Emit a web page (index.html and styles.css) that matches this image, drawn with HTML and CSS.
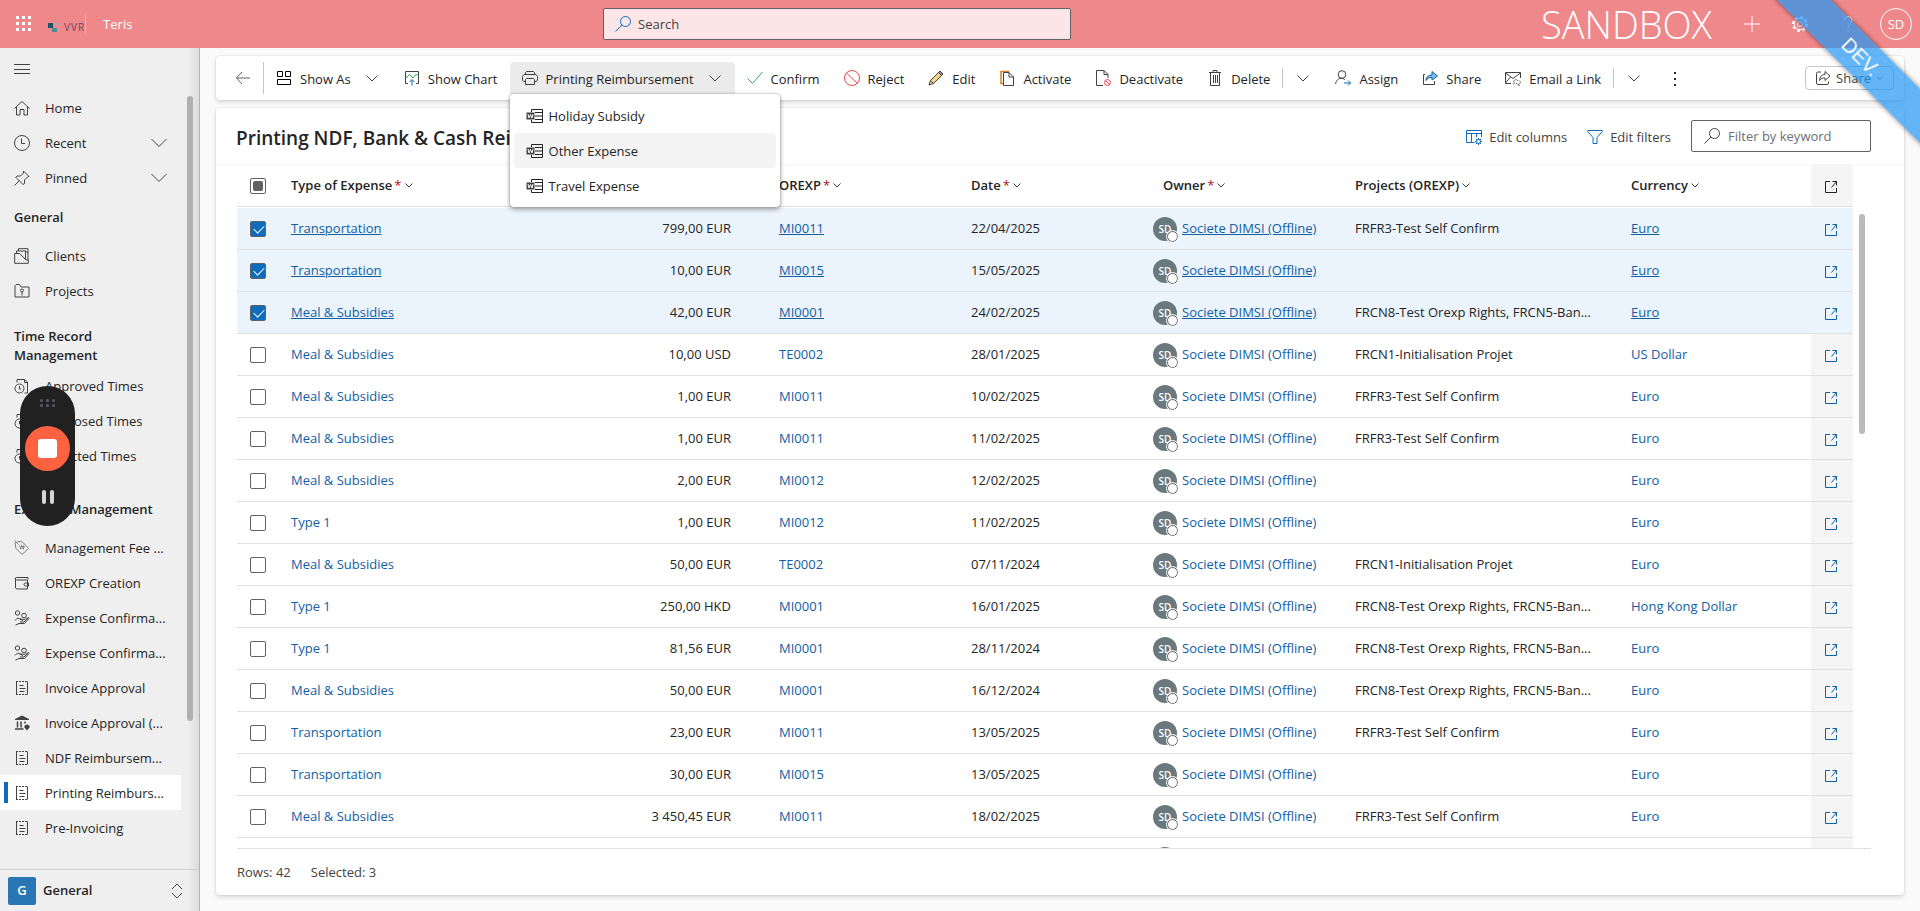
FILE: index.html
```html
<!DOCTYPE html>
<html lang="en">
<head>
    <meta charset="UTF-8">
    <meta name="viewport" content="width=device-width, initial-scale=1.0">
    <title>Printing Reimbursement - Teris</title>
    <link rel="stylesheet" href="styles.css">
</head>
<body>
    <!-- icon sprite -->
    <svg class="sprite" aria-hidden="true">
        <symbol id="i-chevron" viewBox="0 0 16 16"><path d="M2.5 5.500 8 11l5.500-5.500"/></symbol>
        <symbol id="i-chevron-big" viewBox="0 0 16 16"><path d="M.5 4 8 11.500 15.500 4"/></symbol>
        <symbol id="i-sort" viewBox="0 0 10 10"><path d="m1.500 3.500 3.500 3.500 3.500-3.500"/></symbol>
        <symbol id="i-search" viewBox="0 0 16 16"><circle cx="10.500" cy="5.500" r="5"/><path d="M7 9 .5 15.500"/></symbol>
        <symbol id="i-home" viewBox="0 0 16 16"><path d="M.5 8.500 8 1.500l7.500 7M2.500 7v8H6v-5.500h4V15h3.500V7"/></symbol>
        <symbol id="i-clock" viewBox="0 0 16 16"><circle cx="8" cy="8" r="7.500"/><path d="M7.500 3.500v5H11"/></symbol>
        <symbol id="i-pin" viewBox="0 0 16 16"><path d="m.5 15.500 5-5M9.500 1l5.500 5.500-1.500.5-3 3v3.500L9 14.500 1.800 7.300 3 6h3.500l3-3z"/></symbol>
        <symbol id="i-clients" viewBox="0 0 16 16"><path d="M.7 5.500h5L12 12h2.300V15.300H.7zM2.500 5.500V3h9M4.500 3V.7h9.500V12M14 5 11.500 3v8.500"/></symbol>
        <symbol id="i-projects" viewBox="0 0 16 16"><path d="M1 2.500V14h14V4H7L5.500 1.500H2z"/><circle cx="8" cy="7.500" r="1.500"/><path d="M8 9v3.500"/></symbol>
        <symbol id="i-times" viewBox="0 0 16 16"><circle cx="5.500" cy="10.500" r="4.500"/><path d="M5.500 8v3H7M3 4.500v-3h7.500L13.500 4v11h-3M10.500 1.500v3h3"/></symbol>
        <symbol id="i-tag" viewBox="0 0 16 16"><g class="soft"><path d="m1 3 1 5.500 6 6L14.500 8.500 8.500 2 4.500 1.500zM.5.5l4 4"/><path d="M5.500 5.500 7 8.500M8 4.500l-1 2 3 .5M6 9l5-2.500M9.500 5.500v4"/></g></symbol>
        <symbol id="i-wallet" viewBox="0 0 16 16"><path d="M14 4.500V2.500H2.500a1 1 0 0 0 0 2.500H13.500v9H3L1.500 13V3M14.500 8h-3a1.500 1.500 0 0 0 0 3h3z"/></symbol>
        <symbol id="i-coins" viewBox="0 0 16 16"><circle cx="3.500" cy="3" r="2.200"/><circle cx="10" cy="5.500" r="2.300"/><path d="M1 10.500 3.500 8l4 1.500 1 1.500M6 12h4L14.500 7.500l.5 1L10.500 13.500H5L1.500 15M6 9l5 .5 2-2"/></symbol>
        <symbol id="i-bill" viewBox="0 0 16 16"><path d="M2.500 1.500v13M13.500 1.500v13M5.500 5.500h4M5.500 8.500h6M5.500 11.500h5"/><path class="dashes" d="M2 1.500h12M2 14.500h12"/></symbol>
        <symbol id="i-bank" viewBox="0 0 16 16"><path class="solid" d="M8 .5 15 4v1H1V4z"/><path class="thick" d="M3.500 6.500v6M7 6.500v6M11 6.500v2M1 14h8.500"/><path class="solid" d="m13 9.500 2.500 1v2L13 15.500l-2.500-3v-2z"/></symbol>
        <symbol id="i-back" viewBox="0 0 16 16"><path d="M7 2 1.500 8 7 14M1.500 8H15"/></symbol>
        <symbol id="i-showas" viewBox="0 0 16 16"><path d="M1.500 1.500h5v5h-5zM9.500 1.500h5v5h-5zM1.500 9.500h13v5h-13z"/></symbol>
        <symbol id="i-chart" viewBox="0 0 16 16"><path d="M4 13.500H1.500V1.500h13v12H12"/><path class="green" d="m2 8 3.500-3.500L9 8l3.500-4 2 2"/><path class="blue" d="M8 15.500V10M5.500 12 8 9.500l2.500 2.500"/></symbol>
        <symbol id="i-print" viewBox="0 0 16 16"><path d="M3.500 4.500V2.500l1-1h7l1 1v2M3.500 11.500H1.500L.5 10V6.500L2 4.500h12l1.500 2V10l-1 1.500h-2M4.500 8.500h7l1 1v5h-9v-5z"/></symbol>
        <symbol id="i-word" viewBox="0 0 17 16"><path class="ink" d="M5.500 4V1.500h11v13h-11V12M9 4.500h7.500M9 8h7.500M9 11.500h7.500"/><path class="solid" d="M.5 4.500h8v7h-8z"/><path class="pen" d="M2 6l1 4 1.500-3.500L6 10l1-4"/></symbol>
        <symbol id="i-check" viewBox="0 0 16 16"><path class="green" d="m.5 8.500 5 5L15.500 2"/></symbol>
        <symbol id="i-ban" viewBox="0 0 16 16"><g class="red"><circle cx="8" cy="8" r="7.500"/><path d="m2.500 3 11 10.500"/></g></symbol>
        <symbol id="i-pencil" viewBox="0 0 16 16"><path class="wood" d="M1 15 2.500 10.500 12 1l3 3-9.500 9.500z"/><path class="plum" d="m10.500 2.500 1.500-1.500 3 3-1.500 1.500z"/><path d="m2.500 10.500 3 3"/></symbol>
        <symbol id="i-activate" viewBox="0 0 16 16"><path class="orange" d="M4 13.500H2V1.500h8"/><path d="M4.500 2.500H10L14.500 7v8.500h-10zM10 2.500V7h4.500"/></symbol>
        <symbol id="i-deactivate" viewBox="0 0 16 16"><path d="M8 15.500H1.500V.5H9L13 4.500V8M9 .5v4h4"/><g class="red"><circle cx="12.500" cy="12.500" r="3"/><path d="m10.500 10.500 4 4"/></g></symbol>
        <symbol id="i-trash" viewBox="0 0 16 16"><path d="M2 2.500h12M6 2.500v-2h4v2M3.500 2.500v13h9v-13M6.500 5v8M8.500 5v8M10.500 5v8"/></symbol>
        <symbol id="i-assign" viewBox="0 0 16 16"><circle cx="7" cy="4.500" r="3.800"/><path d="M.5 14C1.500 10 3.500 8.300 6 8.300c2 0 3 .7 4 1.700"/><path class="blue" d="M9 13h6.500M13 10.500l2.500 2.500L13 15.500"/></symbol>
        <symbol id="i-share" viewBox="0 0 16 16"><path d="M3 4.500H1.500V14.500h11V11"/><path class="sky" d="M4 10.500c.5-4 2.500-5.500 6-5.500V1.500L15.500 6 10 10V7.500c-3 0-4.500.7-6 3z"/></symbol>
        <symbol id="i-mail" viewBox="0 0 16 16"><path d="M6 13.500H.5V2.500h15V8M.5 3 8 8.500 15.500 3M.5 13 5.500 7"/><path class="soft" d="M9 12.500a2 2 0 0 1 3-2.500l1 1M14.500 10.500a2 2 0 0 1-2.500 3.500l-1-1M8 14l2-1M13 15l2 .5"/></symbol>
        <symbol id="i-share-out" viewBox="0 0 16 16"><path d="M6 2H3a1.500 1.500 0 0 0-1.500 1.500V13A1.500 1.500 0 0 0 3 14.500h9A1.500 1.500 0 0 0 13.500 13v-1.500"/><path d="M4.500 10.500c.5-4 2-6 5.500-6V1.500L15 6l-5 4.500V8C7.500 7.800 6 8.500 4.500 10.500z"/></symbol>
        <symbol id="i-columns" viewBox="0 0 16 16"><path d="M8.500 13.500H.5V1.500h15V8M.5 4.500h15M5.500 4.500v9M10.500 4.500V8"/><circle cx="12.500" cy="12.500" r="2"/><path d="M12.500 9v1.500M12.500 14.500V16M9 12.500h1.500M14.500 12.500H16M10 10l1 1M14 14l1 1M15 10l-1 1M11 14l-1 1"/></symbol>
        <symbol id="i-filter" viewBox="0 0 16 16"><path d="M.7 1.500h14.600v1L10 8.500v6H6v-6L.7 2.500z"/></symbol>
        <symbol id="i-open" viewBox="0 0 12 12"><path d="M5 .5H.5v11h11V7M7.500.5h4v4M11.500.5l-5 6"/></symbol>
        <symbol id="i-plus" viewBox="0 0 16 16"><path d="M8 0v16M0 8h16"/></symbol>
        <symbol id="i-gear" viewBox="0 0 16 16"><circle cx="8" cy="8" r="5.600"/><circle cx="8" cy="8" r="2.500"/><circle class="cogs" cx="8" cy="8" r="7"/></symbol>
        <symbol id="i-help" viewBox="0 0 16 16"><path d="M4 4.500C4 2 5.500.7 8 .7s4 1.300 4 3.600C12 7.500 8 8 8 11.500M8 14v1.500"/></symbol>
        <symbol id="i-updown" viewBox="0 0 12 16"><path d="M1 6l5-5 5 5M1 10l5 5 5-5"/></symbol>
        <symbol id="i-menu" viewBox="0 0 16 16"><path d="M0 3.500h16M0 8.500h16M0 12.500h16"/></symbol>
        <symbol id="i-waffle" viewBox="0 0 16 16"><path class="dots" d="M0 0h3v3H0zM6 0h3v3H6zM12 0h3v3h-3zM0 6h3v3H0zM6 6h3v3H6zM12 6h3v3h-3zM0 12h3v3H0zM6 12h3v3H6zM12 12h3v3h-3z"/></symbol>
    </svg>

    <header class="topbar">
        <div class="topbar-left">
            <button class="icon-button" aria-label="App launcher"><svg class="icon"><use href="#i-waffle"/></svg></button>
            <a class="logo" href="#">
                <svg class="logo-mark" viewBox="0 0 12 12"><path fill="#1d5468" d="M0 2h5v5H0z"/><path fill="#b9a0a3" d="M7 1h4v4H7z"/><path fill="#47909a" d="M4 7h5v4H4z"/></svg>
                <span class="logo-text">VVR</span>
            </a>
            <a class="app-name" href="#">Teris</a>
        </div>
        <label class="search">
            <svg class="icon blue-icon"><use href="#i-search"/></svg>
            <input type="search" placeholder="Search" aria-label="Search">
        </label>
        <div class="topbar-right">
            <span class="env">SANDBOX</span>
            <button class="icon-button" aria-label="New"><svg class="icon"><use href="#i-plus"/></svg></button>
            <button class="icon-button" aria-label="Settings"><svg class="icon"><use href="#i-gear"/></svg></button>
            <button class="icon-button" aria-label="Help"><svg class="icon"><use href="#i-help"/></svg></button>
            <button class="account">SD</button>
        </div>
    </header>

    <div class="page">
        <aside class="sidebar">
            <button class="burger" aria-label="Menu"><svg class="icon"><use href="#i-menu"/></svg></button>
            <nav class="nav">
                <a class="nav-item" href="#"><svg class="icon"><use href="#i-home"/></svg>Home</a>
                <a class="nav-item" href="#"><svg class="icon"><use href="#i-clock"/></svg>Recent<svg class="icon nav-chevron"><use href="#i-chevron-big"/></svg></a>
                <a class="nav-item" href="#"><svg class="icon"><use href="#i-pin"/></svg>Pinned<svg class="icon nav-chevron"><use href="#i-chevron-big"/></svg></a>
                <h2 class="nav-title">General</h2>
                <a class="nav-item" href="#"><svg class="icon"><use href="#i-clients"/></svg>Clients</a>
                <a class="nav-item" href="#"><svg class="icon"><use href="#i-projects"/></svg>Projects</a>
                <h2 class="nav-title spaced">Time Record Management</h2>
                <a class="nav-item" href="#"><svg class="icon"><use href="#i-times"/></svg>Approved Times</a>
                <a class="nav-item" href="#"><svg class="icon"><use href="#i-times"/></svg>Proposed Times</a>
                <a class="nav-item" href="#"><svg class="icon"><use href="#i-times"/></svg>Rejected Times</a>
                <h2 class="nav-title spaced">Expense Management</h2>
                <a class="nav-item" href="#"><svg class="icon"><use href="#i-tag"/></svg>Management Fee ...</a>
                <a class="nav-item" href="#"><svg class="icon"><use href="#i-wallet"/></svg>OREXP Creation</a>
                <a class="nav-item" href="#"><svg class="icon"><use href="#i-coins"/></svg>Expense Confirma...</a>
                <a class="nav-item" href="#"><svg class="icon"><use href="#i-coins"/></svg>Expense Confirma...</a>
                <a class="nav-item" href="#"><svg class="icon"><use href="#i-bill"/></svg>Invoice Approval</a>
                <a class="nav-item" href="#"><svg class="icon"><use href="#i-bank"/></svg>Invoice Approval (...</a>
                <a class="nav-item" href="#"><svg class="icon"><use href="#i-bill"/></svg>NDF Reimbursem...</a>
                <a class="nav-item active" href="#"><svg class="icon"><use href="#i-bill"/></svg>Printing Reimburs...</a>
                <a class="nav-item" href="#"><svg class="icon"><use href="#i-bill"/></svg>Pre-Invoicing</a>
                <div class="nav-scroll"></div>
            </nav>
            <button class="area">
                <span class="area-tile">G</span>
                <span class="area-name">General</span>
                <svg class="area-arrows"><use href="#i-updown"/></svg>
            </button>
        </aside>

        <main class="main">
            <div class="commands">
                <button class="back" aria-label="Back"><svg class="icon"><use href="#i-back"/></svg></button>
                <span class="rule tall"></span>
                <button class="command"><svg class="icon black"><use href="#i-showas"/></svg>Show As<svg class="icon more"><use href="#i-chevron"/></svg></button>
                <button class="command"><svg class="icon"><use href="#i-chart"/></svg>Show Chart</button>
                <div class="dropdown">
                    <button class="command open" aria-expanded="true"><svg class="icon"><use href="#i-print"/></svg>Printing Reimbursement<svg class="icon more"><use href="#i-chevron"/></svg></button>
                    <div class="menu">
                        <button class="menu-item"><svg class="icon word"><use href="#i-word"/></svg>Holiday Subsidy</button>
                        <button class="menu-item hover"><svg class="icon word"><use href="#i-word"/></svg>Other Expense</button>
                        <button class="menu-item"><svg class="icon word"><use href="#i-word"/></svg>Travel Expense</button>
                    </div>
                </div>
                <button class="command"><svg class="icon"><use href="#i-check"/></svg>Confirm</button>
                <button class="command"><svg class="icon"><use href="#i-ban"/></svg>Reject</button>
                <button class="command"><svg class="icon"><use href="#i-pencil"/></svg>Edit</button>
                <button class="command"><svg class="icon"><use href="#i-activate"/></svg>Activate</button>
                <button class="command"><svg class="icon"><use href="#i-deactivate"/></svg>Deactivate</button>
                <button class="command"><svg class="icon"><use href="#i-trash"/></svg>Delete</button>
                <span class="rule"></span>
                <button class="command" aria-label="More delete commands"><svg class="icon"><use href="#i-chevron"/></svg></button>
                <button class="command"><svg class="icon"><use href="#i-assign"/></svg>Assign</button>
                <button class="command"><svg class="icon"><use href="#i-share"/></svg>Share</button>
                <button class="command"><svg class="icon"><use href="#i-mail"/></svg>Email a Link</button>
                <span class="rule"></span>
                <button class="command" aria-label="More email commands"><svg class="icon"><use href="#i-chevron"/></svg></button>
                <button class="command overflow" aria-label="More commands"><i></i><i></i><i></i></button>
                <button class="share"><svg class="icon"><use href="#i-share-out"/></svg>Share<svg class="icon tiny"><use href="#i-sort"/></svg></button>
            </div>

            <section class="card">
                <div class="card-head">
                    <h1 class="card-title">Printing NDF, Bank &amp; Cash Reimbursement</h1>
                    <button class="tool"><svg class="icon blue-icon"><use href="#i-columns"/></svg>Edit columns</button>
                    <button class="tool"><svg class="icon blue-icon"><use href="#i-filter"/></svg>Edit filters</button>
                    <label class="filter">
                        <svg class="icon"><use href="#i-search"/></svg>
                        <input type="search" placeholder="Filter by keyword" aria-label="Filter by keyword">
                    </label>
                </div>
                <div class="grid">
                    <table class="table">
                        <colgroup>
                            <col class="col-small"><col class="col-type"><col><col><col><col><col class="col-projects"><col><col class="col-small">
                        </colgroup>
                        <thead>
                            <tr>
                                <th class="check"><input type="checkbox" class="box partial" aria-label="Select all rows"></th>
                                <th>Type of Expense<b>*</b><svg class="sort"><use href="#i-sort"/></svg></th>
                                <th class="amount">Amount</th>
                                <th>OREXP<b>*</b><svg class="sort"><use href="#i-sort"/></svg></th>
                                <th>Date<b>*</b><svg class="sort"><use href="#i-sort"/></svg></th>
                                <th>Owner<b>*</b><svg class="sort"><use href="#i-sort"/></svg></th>
                                <th>Projects (OREXP)<svg class="sort"><use href="#i-sort"/></svg></th>
                                <th>Currency<svg class="sort"><use href="#i-sort"/></svg></th>
                                <th class="launch"><svg class="open-icon"><use href="#i-open"/></svg></th>
                            </tr>
                        </thead>
                        <tbody id="rows"></tbody>
                    </table>
                    <div class="grid-scroll"></div>
                </div>
                <footer class="card-foot">
                    <span>Rows: 42</span>
                    <span>Selected: 3</span>
                </footer>
            </section>
        </main>
    </div>

    <div class="ribbon">DEV.</div>

    <div class="recorder">
        <div class="grip"><i></i><i></i><i></i><i></i><i></i><i></i></div>
        <button class="stop" aria-label="Stop recording"></button>
        <button class="pause" aria-label="Pause recording"></button>
    </div>

    <script src="script.js"></script>
</body>
</html>
```
FILE: styles.css
```css
* {
    box-sizing: border-box;
}

body {
    margin: 0;
    height: 100vh;
    display: flex;
    flex-direction: column;
    overflow: hidden;
    background-color: #fafafa;
    color: #242424;
    font-family: "Open Sans", "Noto Sans", sans-serif;
    font-size: 13px;
    line-height: 19px;
}

a {
    color: inherit;
    text-decoration: none;
}

button,
input {
    font: inherit;
    color: inherit;
    border: none;
    background: none;
    padding: 0;
    margin: 0;
}

button {
    cursor: pointer;
    white-space: nowrap;
}

/* icons */
.sprite {
    position: absolute;
    width: 0;
    height: 0;
}

.icon {
    width: 16px;
    height: 16px;
    flex: none;
    fill: none;
    stroke: #424242;
    stroke-width: 1;
}

.black {
    stroke: #000;
}

.blue-icon {
    stroke: #0f6cbd;
}

.solid {
    fill: #424242;
    stroke: none;
}

.dots {
    fill: #fff;
    stroke: none;
}

.soft {
    stroke: #808080;
}

.dashes {
    stroke-dasharray: 2 1;
}

.thick {
    stroke-width: 1.5;
}

.green {
    stroke: #2ea85a;
}

.blue {
    stroke: #0f6cbd;
}

.red {
    stroke: #e8484e;
}

.orange {
    stroke: #e07b24;
    stroke-width: 1.5;
}

.wood {
    fill: #f3d58a;
}

.plum {
    fill: #a878b8;
}

.sky {
    fill: #83bdf0;
    stroke: #0f5f9f;
}

.ink {
    stroke: #242424;
}

.pen {
    stroke: #fff;
}

.cogs {
    stroke-width: 2;
    stroke-dasharray: 3 2.5;
}

/* top bar */
.topbar {
    flex: none;
    height: 48px;
    display: flex;
    align-items: center;
    background-color: #ef888a;
    color: #fff;
}

.topbar .icon {
    stroke: #fff;
}

.topbar .blue-icon {
    stroke: #0f6cbd;
}

.topbar-left {
    width: 603px;
    padding-left: 16px;
    display: flex;
    align-items: center;
}

.icon-button {
    display: flex;
}

.logo {
    display: flex;
    align-items: center;
    gap: 4px;
    height: 20px;
    margin-left: 16px;
    padding-top: 6px;
    border-right: 1px solid #f5b5b6;
}

.logo-mark {
    width: 12px;
    height: 12px;
}

.logo-text {
    color: #6b4a5a;
    font-size: 10px;
    letter-spacing: 1px;
    line-height: 12px;
}

.app-name {
    margin-left: 17px;
}

.search {
    width: 468px;
    height: 32px;
    display: flex;
    align-items: center;
    gap: 7px;
    padding: 0 11px;
    background-color: #fbe5e6;
    border: 1px solid #616161;
    border-radius: 2px;
}

.search input,
.filter input {
    flex: 1;
    min-width: 0;
    outline: none;
}

.search input::placeholder {
    color: #424242;
}

.topbar-right {
    flex: 1;
    display: flex;
    align-items: center;
    justify-content: flex-end;
    gap: 32px;
    padding-right: 8px;
}

.env {
    font-size: 38px;
    font-weight: 300;
    line-height: 48px;
}

.account {
    width: 32px;
    height: 32px;
    margin-left: -8px;
    border: 1px solid #fff;
    border-radius: 50%;
}

/* sidebar */
.page {
    flex: 1;
    min-height: 0;
    display: flex;
}

.sidebar {
    flex: none;
    width: 200px;
    display: flex;
    flex-direction: column;
    border-right: 1px solid #b3b3b3;
    background: linear-gradient(to left, #dcdcdc, #efefef 12px);
}

.burger {
    height: 42px;
    padding-left: 14px;
    display: flex;
    align-items: center;
}

.nav {
    position: relative;
    flex: 1;
    min-height: 0;
}

.nav-item {
    position: relative;
    width: 181px;
    height: 35px;
    display: flex;
    align-items: center;
    gap: 15px;
    padding: 2px 14px 0;
    white-space: nowrap;
}

/* icons sit a little above the text */
.nav-item .icon,
.command .icon {
    margin-bottom: 2px;
}

.nav-item .nav-chevron {
    margin-left: auto;
}

.active {
    background-color: #fff;
}

/* marker of the current page */
.active::before {
    content: "";
    position: absolute;
    left: 4px;
    top: 7px;
    width: 4px;
    height: 21px;
    background-color: #0f6cbd;
}

.nav-title {
    width: 160px;
    min-height: 43px;
    display: flex;
    align-items: center;
    margin: 0;
    padding: 5px 0 3px 14px;
    font-size: 13px;
    font-weight: 600;
}

.spaced {
    margin-top: 14px;
    width: 176px;
}

.nav-scroll {
    position: absolute;
    right: 6px;
    top: 6px;
    width: 6px;
    height: 625px;
    border-radius: 3px;
    background-color: #b0b0b0;
}

.area {
    height: 42px;
    display: flex;
    align-items: center;
    padding: 0 16px 0 8px;
    border-top: 1px solid #d1d1d1;
    font-weight: 600;
}

.area-tile {
    width: 28px;
    height: 28px;
    line-height: 26px;
    margin-right: 7px;
    border-radius: 2px;
    background-color: #2a76b5;
    color: #fff;
}

.area-arrows {
    width: 12px;
    height: 16px;
    margin-left: auto;
    fill: none;
    stroke: #424242;
}

/* command bar */
.main {
    flex: 1;
    min-width: 0;
    display: flex;
    flex-direction: column;
    gap: 8px;
    padding: 8px 16px 16px;
}

.commands,
.card {
    background-color: #fff;
    border-radius: 4px;
    box-shadow: 0 0 2px rgba(0, 0, 0, 0.12), 0 2px 4px rgba(0, 0, 0, 0.14);
}

.commands {
    flex: none;
    height: 44px;
    display: flex;
    align-items: center;
    padding: 0 10px 0 19px;
}

.back {
    display: flex;
    margin-right: 12px;
}

.back .icon {
    stroke: #616161;
}

.rule {
    width: 1px;
    height: 20px;
    background-color: #c7c7c7;
}

.tall {
    height: 32px;
}

.command {
    height: 32px;
    display: flex;
    align-items: center;
    gap: 8px;
    padding: 2px 12px 0;
    border-radius: 4px;
}

.more {
    margin-left: 5px;
}

.open {
    background-color: #ebebeb;
    border-radius: 4px 4px 0 0;
}

.overflow {
    flex-direction: column;
    justify-content: center;
    gap: 4px;
    margin-left: 8px;
}

.overflow i {
    width: 2px;
    height: 2px;
    background-color: #242424;
}

.share {
    height: 24px;
    display: flex;
    align-items: center;
    gap: 5px;
    margin-left: auto;
    padding: 0 9px;
    border: 1px solid #c7c7c7;
    border-radius: 4px;
    color: #424242;
}

.tiny {
    width: 8px;
    height: 8px;
}

.dropdown {
    position: relative;
}

.menu {
    position: absolute;
    z-index: 2;
    left: 0;
    top: 32px;
    width: 270px;
    padding: 4px;
    background-color: #fff;
    border-radius: 4px;
    box-shadow: 0 0 2px rgba(0, 0, 0, 0.3), 0 2px 5px rgba(0, 0, 0, 0.4);
}

.menu-item {
    width: 100%;
    height: 35px;
    display: flex;
    align-items: center;
    gap: 6px;
    padding: 2px 12px 0;
    border-radius: 4px;
}

.hover {
    background-color: #f4f4f4;
}

.menu-item .word {
    width: 17px;
    margin-bottom: 2px;
}

/* list card */
.card {
    flex: 1;
    min-height: 0;
    display: flex;
    flex-direction: column;
}

.card-head {
    flex: none;
    height: 57px;
    display: flex;
    align-items: center;
    gap: 20px;
    padding: 0 33px 0 20px;
    border-bottom: 1px solid #f5f5f5;
}

.card-title {
    flex: 1;
    margin: 0;
    padding-top: 4px;
    font-size: 19px;
    font-weight: 600;
    line-height: 28px;
}

.tool {
    display: flex;
    align-items: center;
    gap: 7px;
    padding-top: 2px;
    color: #424242;
}

.filter {
    width: 180px;
    height: 32px;
    display: flex;
    align-items: center;
    gap: 8px;
    padding: 0 12px;
    border: 1px solid #616161;
    border-radius: 2px;
}

.filter input::placeholder {
    color: #707070;
}

.grid {
    position: relative;
    flex: 1;
    min-height: 0;
    overflow: hidden;
    margin: 0 33px 0 21px;
    border-bottom: 1px solid #e0e0e0;
}

.grid-scroll {
    position: absolute;
    right: 6px;
    top: 49px;
    width: 6px;
    height: 220px;
    border-radius: 3px;
    background-color: #bababa;
}

.table {
    width: calc(100% - 18px);
    table-layout: fixed;
    border-spacing: 0;
}

.table col {
    width: 192px;
}

.table .col-small {
    width: 42px;
}

.table .col-type {
    width: 296px;
}

.table .col-projects {
    width: 276px;
}

.table th,
.table td {
    height: 42px;
    padding: 0 12px;
    text-align: left;
    white-space: nowrap;
    border-bottom: 1px solid #e0e0e0;
}

.table th {
    font-weight: 600;
}

.table th b {
    margin-left: 2px;
    color: #b10e1c;
    font-weight: 400;
}

.sort {
    width: 10px;
    height: 10px;
    margin-left: 2px;
    fill: none;
    stroke: #424242;
}

.table tr:first-child td {
    height: 43px;
    border-top: 1px solid #fff;
}

.table .amount {
    padding-right: 36px;
    text-align: right;
}

.table .check {
    padding: 0 0 0 13px;
}

.table .launch {
    padding: 2px 0 0 14px;
    background-color: #f5f5f5;
}

.table .selected td {
    background-color: #ebf3fc;
}

.table a {
    color: #115ea3;
}

.selected a {
    text-decoration: underline;
}

.owner {
    display: flex;
    align-items: center;
    gap: 5px;
    margin-left: -10px;
}

.avatar {
    position: relative;
    width: 24px;
    height: 24px;
    border-radius: 50%;
    background-color: #69797e;
    color: #fff;
    font-size: 10px;
    font-weight: 600;
    line-height: 24px;
    text-align: center;
}

/* presence dot */
.avatar::after {
    content: "";
    position: absolute;
    right: -1px;
    bottom: -1px;
    width: 9px;
    height: 9px;
    border: 1px solid #616161;
    border-radius: 50%;
    background-color: #fff;
    outline: 1px solid #fff;
}

.open-icon {
    display: block;
    width: 12px;
    height: 12px;
    fill: none;
    stroke: #242424;
}

td .open-icon {
    stroke: #115ea3;
}

.box {
    appearance: none;
    position: relative;
    display: block;
    width: 16px;
    height: 16px;
    border: 1px solid #616161;
    border-radius: 2px;
    background-color: #fff;
}

.box:checked {
    background-color: #0f6cbd;
}

.box:checked::after {
    content: "";
    position: absolute;
    left: 5px;
    top: 1px;
    width: 5px;
    height: 9px;
    border: solid #fff;
    border-width: 0 1px 1px 0;
    transform: rotate(45deg);
}

.partial::after {
    content: "";
    position: absolute;
    inset: 2px;
    border-radius: 2px;
    background-color: #616161;
}

.card-foot {
    flex: none;
    height: 46px;
    display: flex;
    align-items: center;
    gap: 20px;
    padding-left: 21px;
    color: #424242;
}

/* corner ribbon */
.ribbon {
    position: fixed;
    z-index: 5;
    top: 38px;
    right: -62px;
    width: 242px;
    height: 38px;
    line-height: 38px;
    font-family: "Liberation Sans", sans-serif;
    font-size: 20px;
    text-align: center;
    color: #fff;
    background-color: rgba(33, 150, 243, 0.7);
    box-shadow: 0 0 5px rgba(0, 0, 0, 0.5);
    transform: rotate(45deg);
    pointer-events: none;
}

/* floating screen recorder */
.recorder {
    position: fixed;
    z-index: 5;
    left: 20px;
    top: 386px;
    width: 55px;
    height: 140px;
    display: flex;
    flex-direction: column;
    align-items: center;
    padding-top: 13px;
    border-radius: 28px;
    background-color: #212121;
}

.grip {
    display: grid;
    grid-template-columns: 3px 3px 3px;
    gap: 2px 3px;
}

.grip i {
    height: 3px;
    border-radius: 50%;
    background-color: #5c5a6b;
}

.stop {
    width: 45px;
    height: 45px;
    margin-top: 19px;
    border: 13px solid #ff6240;
    border-radius: 50%;
    background-color: #ff6240;
    display: flex;
}

.stop::before {
    content: "";
    width: 19px;
    height: 19px;
    border-radius: 3px;
    background-color: #fff;
}

.pause {
    width: 12px;
    height: 14px;
    margin-top: 19px;
    display: flex;
    justify-content: space-between;
}

.pause::before,
.pause::after {
    content: "";
    width: 4px;
    height: 14px;
    border-radius: 2px;
    background-color: #d6d6d6;
}
```
FILE: script.js
```javascript
// type, amount, orexp, date, projects, currency
const rows = [
    ['Transportation', '799,00 EUR', 'MI0011', '22/04/2025', 'FRFR3-Test Self Confirm', 'Euro'],
    ['Transportation', '10,00 EUR', 'MI0015', '15/05/2025', '', 'Euro'],
    ['Meal & Subsidies', '42,00 EUR', 'MI0001', '24/02/2025', 'FRCN8-Test Orexp Rights, FRCN5-Ban...', 'Euro'],
    ['Meal & Subsidies', '10,00 USD', 'TE0002', '28/01/2025', 'FRCN1-Initialisation Projet', 'US Dollar'],
    ['Meal & Subsidies', '1,00 EUR', 'MI0011', '10/02/2025', 'FRFR3-Test Self Confirm', 'Euro'],
    ['Meal & Subsidies', '1,00 EUR', 'MI0011', '11/02/2025', 'FRFR3-Test Self Confirm', 'Euro'],
    ['Meal & Subsidies', '2,00 EUR', 'MI0012', '12/02/2025', '', 'Euro'],
    ['Type 1', '1,00 EUR', 'MI0012', '11/02/2025', '', 'Euro'],
    ['Meal & Subsidies', '50,00 EUR', 'TE0002', '07/11/2024', 'FRCN1-Initialisation Projet', 'Euro'],
    ['Type 1', '250,00 HKD', 'MI0001', '16/01/2025', 'FRCN8-Test Orexp Rights, FRCN5-Ban...', 'Hong Kong Dollar'],
    ['Type 1', '81,56 EUR', 'MI0001', '28/11/2024', 'FRCN8-Test Orexp Rights, FRCN5-Ban...', 'Euro'],
    ['Meal & Subsidies', '50,00 EUR', 'MI0001', '16/12/2024', 'FRCN8-Test Orexp Rights, FRCN5-Ban...', 'Euro'],
    ['Transportation', '23,00 EUR', 'MI0011', '13/05/2025', 'FRFR3-Test Self Confirm', 'Euro'],
    ['Transportation', '30,00 EUR', 'MI0015', '13/05/2025', '', 'Euro'],
    ['Meal & Subsidies', '3 450,45 EUR', 'MI0011', '18/02/2025', 'FRFR3-Test Self Confirm', 'Euro'],
    ['', '', '', '', '', '']
];
const selectedCount = 3;

function link(text) {
    return text ? `<a href="#">${text.replace('&', '&amp;')}</a>` : '';
}

document.getElementById('rows').innerHTML = rows.map((row, i) => {
    const [type, amount, orexp, date, projects, currency] = row;
    const selected = i < selectedCount;
    return `<tr${selected ? ' class="selected"' : ''}>
        <td class="check"><input type="checkbox" class="box" aria-label="Select row ${i + 1}"${selected ? ' checked' : ''}></td>
        <td>${link(type)}</td>
        <td class="amount">${amount}</td>
        <td>${link(orexp)}</td>
        <td>${date}</td>
        <td><div class="owner"><span class="avatar">${type ? 'SD' : ''}</span>${type ? link('Societe DIMSI (Offline)') : ''}</div></td>
        <td>${projects}</td>
        <td>${link(currency)}</td>
        <td class="launch"><svg class="open-icon"><use href="#i-open"/></svg></td>
    </tr>`;
}).join('');
```
